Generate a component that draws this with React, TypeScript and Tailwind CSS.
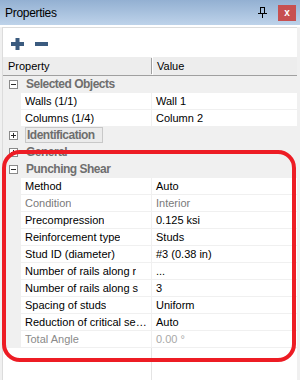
import type { ReactNode } from 'react';

type Row =
  | { kind: 'cat'; label: string; open: boolean; focused?: boolean }
  | { kind: 'prop'; name: string; value: string; tone?: 'ro' | 'faint' };

const rows: Row[] = [
  { kind: 'cat', label: 'Selected Objects', open: true },
  { kind: 'prop', name: 'Walls (1/1)', value: 'Wall 1' },
  { kind: 'prop', name: 'Columns (1/4)', value: 'Column 2' },
  { kind: 'cat', label: 'Identification', open: false, focused: true },
  { kind: 'cat', label: 'General', open: false },
  { kind: 'cat', label: 'Punching Shear', open: true },
  { kind: 'prop', name: 'Method', value: 'Auto' },
  { kind: 'prop', name: 'Condition', value: 'Interior', tone: 'ro' },
  { kind: 'prop', name: 'Precompression', value: '0.125 ksi' },
  { kind: 'prop', name: 'Reinforcement type', value: 'Studs' },
  { kind: 'prop', name: 'Stud ID (diameter)', value: '#3 (0.38 in)' },
  { kind: 'prop', name: 'Number of rails along r', value: '...' },
  { kind: 'prop', name: 'Number of rails along s', value: '3' },
  { kind: 'prop', name: 'Spacing of studs', value: 'Uniform' },
  { kind: 'prop', name: 'Reduction of critical section', value: 'Auto' },
  { kind: 'prop', name: 'Total Angle', value: '0.00 °', tone: 'faint' },
];

// small +/- box in the left gutter
function Expander({ open }: { open: boolean }) {
  return (
    <svg width="9" height="9" viewBox="0 0 9 9" className="block">
      <rect x="0.5" y="0.5" width="8" height="8" fill="#fff" stroke="#8a8a8a" />
      <line x1="2" y1="4.5" x2="7" y2="4.5" stroke="#2a2a2a" />
      {!open && <line x1="4.5" y1="2" x2="4.5" y2="7" stroke="#2a2a2a" />}
    </svg>
  );
}

function Cell({ children, className = '' }: { children: ReactNode; className?: string }) {
  return (
    <div className={`h-[16px] bg-white flex items-center overflow-hidden ${className}`}>
      {children}
    </div>
  );
}

export default function App() {
  return (
    <div className="relative w-[300px] h-[380px] overflow-hidden bg-[#f0f0f0] font-['Liberation_Sans',Arial,sans-serif] text-[11px] text-black leading-none">
      {/* title bar */}
      <div className="h-[25px] bg-gradient-to-b from-[#93b0d2] to-[#bed3ea] flex items-center pl-[5px] pr-[4px]">
        <span className="text-[12px] tracking-[-0.3px]">Properties</span>
        <div className="ml-auto flex items-center gap-[11px]">
          <svg width="9" height="11" viewBox="0 0 9 11">
            <rect x="2.5" y="0.5" width="4" height="6" fill="none" stroke="#000" />
            <rect x="0" y="6" width="9" height="1" fill="#000" />
            <rect x="4" y="7" width="1" height="4" fill="#000" />
          </svg>
          <div className="w-[18px] h-[16px] bg-[#c75050] flex items-center justify-center text-white text-[10px] font-bold">
            x
          </div>
        </div>
      </div>
      <div className="h-[2px] bg-white" />

      {/* body */}
      <div className="ml-[2px] mr-[3px] border-l border-t border-[#dcdcdc] bg-white h-[353px] flex flex-col">
        {/* toolbar */}
        <div className="h-[29px] flex items-center gap-[11px] pl-[8px] pt-[2px]">
          <svg width="13" height="12" viewBox="0 0 13 12">
            <rect x="4.5" y="0" width="4" height="12" fill="#3b5b7f" />
            <rect x="0" y="4" width="13" height="4" fill="#3b5b7f" />
          </svg>
          <svg width="13" height="12" viewBox="0 0 13 12">
            <rect x="0" y="4" width="13" height="4" fill="#3b5b7f" />
          </svg>
        </div>

        {/* header */}
        <div className="h-[19px] bg-[#ededed] border-b border-[#a0a0a0] flex items-center">
          <div className="w-[148px] pl-[5px]">Property</div>
          <div className="self-stretch my-[1px] w-px bg-[#a0a0a0]" />
          <div className="w-px self-stretch bg-white" />
          <div className="pl-[4px]">Value</div>
        </div>

        {/* grid rows */}
        <div className="bg-[#f0f0f0] flex flex-col">
          {rows.map((r, i) =>
            r.kind === 'cat' ? (
              <div key={i} className="h-[17px] flex items-start">
                <div className="w-[22px] h-[16px] flex items-center pl-[6px]">
                  <Expander open={r.open} />
                </div>
                <div
                  className={`h-[16px] flex items-center px-[1px] text-[12px] font-bold tracking-[-0.5px] text-[#6e6e6e] ${
                    r.focused ? 'border border-[#c8c8c8] bg-[#ebebeb] w-[78px]' : ''
                  }`}
                >
                  {r.label}
                </div>
              </div>
            ) : (
              <div key={i} className="h-[17px] flex items-start">
                <div className="w-[18px]" />
                <Cell className="w-[130px] pl-[4px]">
                  <span
                    className={`truncate ${
                      r.tone === 'ro' ? 'text-[#7a7a7a]' : r.tone === 'faint' ? 'text-[#8a8a8a]' : ''
                    }`}
                  >
                    {r.name}
                  </span>
                </Cell>
                <div className="w-px" />
                <Cell className="flex-1 pl-[4px]">
                  <span
                    className={
                      r.tone === 'ro' ? 'text-[#7a7a7a]' : r.tone === 'faint' ? 'text-[#a8a8a8]' : ''
                    }
                  >
                    {r.value}
                  </span>
                </Cell>
              </div>
            )
          )}
        </div>

        {/* empty space below the grid */}
        <div className="flex-1 flex">
          <div className="w-[148px]" />
          <div className="w-px bg-[#e4e4e4]" />
        </div>
      </div>

      {/* red highlight drawn over the panel */}
      <div className="absolute left-[2px] top-[150px] w-[294px] h-[212px] border-[4px] border-[#ed1c24] rounded-[18px] pointer-events-none" />
    </div>
  );
}
